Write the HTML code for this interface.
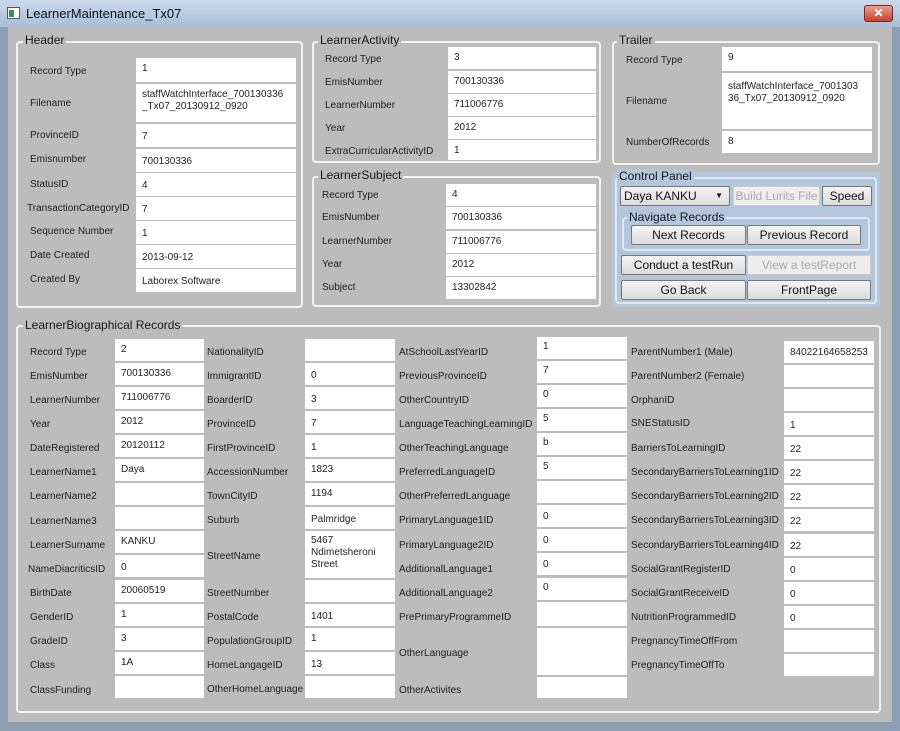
<!DOCTYPE html>
<html><head><meta charset="utf-8"><style>
*{margin:0;padding:0;box-sizing:border-box}
body{width:900px;height:731px;overflow:hidden;background:#8d9fb3;font-family:"Liberation Sans",sans-serif;position:relative;color:#1e1e1e}
.tb{position:absolute;left:0;top:0;width:900px;height:27px;background:linear-gradient(#c9d9ea,#a9bfd6)}
.ttl{position:absolute;left:26px;top:6px;font-size:13px;color:#111}
.ico{position:absolute;left:7px;top:7px;width:13px;height:12px;background:#fff;border:1px solid #557}
.ico:after{content:"";position:absolute;left:1px;top:2px;width:5px;height:7px;background:#3a8a5a}
.x{position:absolute;left:864px;top:5px;width:29px;height:17px;border-radius:3px;background:linear-gradient(#e8a090,#c8402a);border:1px solid #7a2a20;color:#fff;font-size:12px;font-weight:bold;text-align:center;line-height:15px}
.cl{position:absolute;left:8px;top:27px;width:884px;height:695px;background:#bcbcbc}
.g{position:absolute;border:2px solid #f2f2f2;border-radius:4px}
.gt{position:absolute;font-size:12px;background:#bcbcbc;padding:0 2px;color:#1a1a1a}
.l{position:absolute;font-size:10px;color:#222;white-space:nowrap}
.b{position:absolute;background:#fff;font-size:10px;padding:5px 0 0 6px;line-height:12px;color:#222}
.bt{position:absolute;height:20px;border:1px solid #777;border-radius:2px;background:linear-gradient(#f4f4f4,#dcdcdc);font-size:12px;text-align:center;line-height:18px;color:#111}
.dis{color:#aaa;background:#ededed;border-color:#ccc}
</style></head><body>
<div class="tb"><div class="ico"></div><div class="ttl">LearnerMaintenance_Tx07</div><div class="x">✕</div></div>
<div class="cl"></div>

<!-- Header -->
<div class="g" style="left:16px;top:41px;width:287px;height:267px"></div>
<div class="gt" style="left:23px;top:33px">Header</div>
<div class="l" style="left:30px;top:66px">Record Type</div><div class="b" style="left:136px;top:58px;width:160px;height:24px">1</div>
<div class="l" style="left:30px;top:98px">Filename</div><div class="b" style="left:136px;top:84px;width:160px;height:38px">staffWatchInterface_700130336<br>_Tx07_20130912_0920</div>
<div class="l" style="left:30px;top:130px">ProvinceID</div><div class="b" style="left:136px;top:124px;width:160px;height:23px;padding-top:7px">7</div>
<div class="l" style="left:30px;top:154px">Emisnumber</div><div class="b" style="left:136px;top:149px;width:160px;height:23px;padding-top:7px">700130336</div>
<div class="l" style="left:30px;top:179px">StatusID</div><div class="b" style="left:136px;top:173px;width:160px;height:23px;padding-top:7px">4</div>
<div class="l" style="left:27px;top:203px">TransactionCategoryID</div><div class="b" style="left:136px;top:197px;width:160px;height:23px;padding-top:7px">7</div>
<div class="l" style="left:30px;top:226px">Sequence Number</div><div class="b" style="left:136px;top:221px;width:160px;height:23px;padding-top:7px">1</div>
<div class="l" style="left:30px;top:250px">Date Created</div><div class="b" style="left:136px;top:245px;width:160px;height:23px;padding-top:7px">2013-09-12</div>
<div class="l" style="left:30px;top:274px">Created By</div><div class="b" style="left:136px;top:269px;width:160px;height:23px;padding-top:7px">Laborex Software</div>

<!-- LearnerActivity -->
<div class="g" style="left:312px;top:41px;width:289px;height:122px"></div>
<div class="gt" style="left:318px;top:33px">LearnerActivity</div>
<div class="l" style="left:325px;top:54px">Record Type</div><div class="b" style="left:448px;top:47px;width:148px;height:22px">3</div>
<div class="l" style="left:325px;top:77px">EmisNumber</div><div class="b" style="left:448px;top:71px;width:148px;height:22px">700130336</div>
<div class="l" style="left:325px;top:100px">LearnerNumber</div><div class="b" style="left:448px;top:94px;width:148px;height:22px">711006776</div>
<div class="l" style="left:325px;top:123px">Year</div><div class="b" style="left:448px;top:117px;width:148px;height:22px">2012</div>
<div class="l" style="left:325px;top:146px">ExtraCurricularActivityID</div><div class="b" style="left:448px;top:140px;width:148px;height:20px">1</div>

<!-- LearnerSubject -->
<div class="g" style="left:312px;top:176px;width:289px;height:131px"></div>
<div class="gt" style="left:318px;top:168px">LearnerSubject</div>
<div class="l" style="left:322px;top:190px">Record Type</div><div class="b" style="left:446px;top:184px;width:150px;height:22px">4</div>
<div class="l" style="left:322px;top:212px">EmisNumber</div><div class="b" style="left:446px;top:207px;width:150px;height:22px">700130336</div>
<div class="l" style="left:322px;top:236px">LearnerNumber</div><div class="b" style="left:446px;top:231px;width:150px;height:22px">711006776</div>
<div class="l" style="left:322px;top:259px">Year</div><div class="b" style="left:446px;top:254px;width:150px;height:22px">2012</div>
<div class="l" style="left:322px;top:282px">Subject</div><div class="b" style="left:446px;top:277px;width:150px;height:22px">13302842</div>

<!-- Trailer -->
<div class="g" style="left:612px;top:41px;width:268px;height:124px"></div>
<div class="gt" style="left:617px;top:33px">Trailer</div>
<div class="l" style="left:626px;top:55px">Record Type</div><div class="b" style="left:722px;top:47px;width:150px;height:24px">9</div>
<div class="l" style="left:626px;top:96px">Filename</div><div class="b" style="left:722px;top:73px;width:150px;height:56px;padding-top:8px">staffWatchInterface_7001303<br>36_Tx07_20130912_0920</div>
<div class="l" style="left:626px;top:137px">NumberOfRecords</div><div class="b" style="left:722px;top:131px;width:150px;height:22px">8</div>

<!-- Control Panel -->
<div style="position:absolute;left:612px;top:172px;width:268px;height:135px;background:#b3c6dc;border-radius:3px"></div>
<div class="g" style="left:615px;top:177px;width:262px;height:127px;border-color:#dfe8f2"></div>
<div class="gt" style="left:617px;top:169px;background:#b3c6dc">Control Panel</div>
<div class="bt" style="left:620px;top:186px;width:110px;text-align:left;padding-left:3px">Daya KANKU<span style="position:absolute;right:6px;top:0;font-size:8px">▼</span></div>
<div class="bt dis" style="left:733px;top:186px;width:87px">Build Lurits File</div>
<div class="bt" style="left:822px;top:186px;width:50px">Speed</div>
<div class="g" style="left:622px;top:217px;width:248px;height:34px;border-color:#dfe8f2"></div>
<div class="gt" style="left:627px;top:210px;background:#b3c6dc">Navigate Records</div>
<div class="bt" style="left:631px;top:225px;width:115px">Next Records</div>
<div class="bt" style="left:747px;top:225px;width:114px">Previous Record</div>
<div class="bt" style="left:621px;top:255px;width:125px">Conduct a testRun</div>
<div class="bt dis" style="left:747px;top:255px;width:124px">View a testReport</div>
<div class="bt" style="left:621px;top:280px;width:125px">Go Back</div>
<div class="bt" style="left:747px;top:280px;width:124px">FrontPage</div>

<!-- Bio -->
<div class="g" style="left:16px;top:325px;width:865px;height:388px"></div>
<div class="gt" style="left:23px;top:318px">LearnerBiographical Records</div>

<div class="l" style="left:30px;top:347px">Record Type</div><div class="b" style="left:115px;top:339px;width:89px;height:22px">2</div>
<div class="l" style="left:30px;top:371px">EmisNumber</div><div class="b" style="left:115px;top:363px;width:89px;height:22px">700130336</div>
<div class="l" style="left:30px;top:395px">LearnerNumber</div><div class="b" style="left:115px;top:387px;width:89px;height:22px">711006776</div>
<div class="l" style="left:30px;top:419px">Year</div><div class="b" style="left:115px;top:411px;width:89px;height:22px">2012</div>
<div class="l" style="left:30px;top:443px">DateRegistered</div><div class="b" style="left:115px;top:435px;width:89px;height:22px">20120112</div>
<div class="l" style="left:30px;top:467px">LearnerName1</div><div class="b" style="left:115px;top:459px;width:89px;height:22px">Daya</div>
<div class="l" style="left:30px;top:491px">LearnerName2</div><div class="b" style="left:115px;top:483px;width:89px;height:22px"></div>
<div class="l" style="left:30px;top:516px">LearnerName3</div><div class="b" style="left:115px;top:507px;width:89px;height:22px"></div>
<div class="l" style="left:30px;top:540px">LearnerSurname</div><div class="b" style="left:115px;top:531px;width:89px;height:22px">KANKU</div>
<div class="l" style="left:28px;top:564px">NameDiacriticsID</div><div class="b" style="left:115px;top:555px;width:89px;height:22px;padding-top:7px">0</div>
<div class="l" style="left:30px;top:588px">BirthDate</div><div class="b" style="left:115px;top:580px;width:89px;height:22px">20060519</div>
<div class="l" style="left:30px;top:612px">GenderID</div><div class="b" style="left:115px;top:604px;width:89px;height:22px">1</div>
<div class="l" style="left:30px;top:636px">GradeID</div><div class="b" style="left:115px;top:628px;width:89px;height:22px">3</div>
<div class="l" style="left:30px;top:660px">Class</div><div class="b" style="left:115px;top:652px;width:89px;height:22px">1A</div>
<div class="l" style="left:30px;top:685px">ClassFunding</div><div class="b" style="left:115px;top:676px;width:89px;height:22px"></div>

<div class="l" style="left:207px;top:347px">NationalityID</div><div class="b" style="left:305px;top:339px;width:90px;height:22px"></div>
<div class="l" style="left:207px;top:371px">ImmigrantID</div><div class="b" style="left:305px;top:363px;width:90px;height:22px;padding-top:7px">0</div>
<div class="l" style="left:207px;top:395px">BoarderID</div><div class="b" style="left:305px;top:387px;width:90px;height:22px;padding-top:7px">3</div>
<div class="l" style="left:207px;top:419px">ProvinceID</div><div class="b" style="left:305px;top:411px;width:90px;height:22px;padding-top:7px">7</div>
<div class="l" style="left:207px;top:443px">FirstProvinceID</div><div class="b" style="left:305px;top:435px;width:90px;height:22px;padding-top:7px">1</div>
<div class="l" style="left:207px;top:467px">AccessionNumber</div><div class="b" style="left:305px;top:459px;width:90px;height:22px">1823</div>
<div class="l" style="left:207px;top:491px">TownCityID</div><div class="b" style="left:305px;top:483px;width:90px;height:22px">1194</div>
<div class="l" style="left:207px;top:515px">Suburb</div><div class="b" style="left:305px;top:507px;width:90px;height:22px;padding-top:7px">Palmridge</div>
<div class="l" style="left:207px;top:551px">StreetName</div><div class="b" style="left:305px;top:531px;width:90px;height:47px;padding-top:4px">5467<br>Ndimetsheroni<br>Street</div>
<div class="l" style="left:207px;top:588px">StreetNumber</div><div class="b" style="left:305px;top:580px;width:90px;height:22px"></div>
<div class="l" style="left:207px;top:612px">PostalCode</div><div class="b" style="left:305px;top:604px;width:90px;height:22px;padding-top:7px">1401</div>
<div class="l" style="left:207px;top:636px">PopulationGroupID</div><div class="b" style="left:305px;top:628px;width:90px;height:22px">1</div>
<div class="l" style="left:207px;top:660px">HomeLangageID</div><div class="b" style="left:305px;top:652px;width:90px;height:22px;padding-top:7px">13</div>
<div class="l" style="left:207px;top:684px">OtherHomeLanguage</div><div class="b" style="left:305px;top:676px;width:90px;height:22px"></div>

<div class="l" style="left:399px;top:347px">AtSchoolLastYearID</div><div class="b" style="left:537px;top:337px;width:90px;height:22px;padding-top:4px">1</div>
<div class="l" style="left:399px;top:371px">PreviousProvinceID</div><div class="b" style="left:537px;top:361px;width:90px;height:22px;padding-top:4px">7</div>
<div class="l" style="left:399px;top:395px">OtherCountryID</div><div class="b" style="left:537px;top:385px;width:90px;height:22px;padding-top:4px">0</div>
<div class="l" style="left:399px;top:419px">LanguageTeachingLearningID</div><div class="b" style="left:537px;top:409px;width:90px;height:22px;padding-top:4px">5</div>
<div class="l" style="left:399px;top:443px">OtherTeachingLanguage</div><div class="b" style="left:537px;top:433px;width:90px;height:22px;padding-top:4px">b</div>
<div class="l" style="left:399px;top:467px">PreferredLanguageID</div><div class="b" style="left:537px;top:457px;width:90px;height:22px;padding-top:4px">5</div>
<div class="l" style="left:399px;top:491px">OtherPreferredLanguage</div><div class="b" style="left:537px;top:481px;width:90px;height:22px"></div>
<div class="l" style="left:399px;top:515px">PrimaryLanguage1ID</div><div class="b" style="left:537px;top:505px;width:90px;height:22px;padding-top:6px">0</div>
<div class="l" style="left:399px;top:540px">PrimaryLanguage2ID</div><div class="b" style="left:537px;top:529px;width:90px;height:22px;padding-top:6px">0</div>
<div class="l" style="left:399px;top:564px">AdditionalLanguage1</div><div class="b" style="left:537px;top:553px;width:90px;height:22px;padding-top:6px">0</div>
<div class="l" style="left:399px;top:588px">AdditionalLanguage2</div><div class="b" style="left:537px;top:578px;width:90px;height:22px;padding-top:4px">0</div>
<div class="l" style="left:399px;top:612px">PrePrimaryProgrammeID</div><div class="b" style="left:537px;top:602px;width:90px;height:24px"></div>
<div class="l" style="left:399px;top:648px">OtherLanguage</div><div class="b" style="left:537px;top:628px;width:90px;height:47px"></div>
<div class="l" style="left:399px;top:685px">OtherActivites</div><div class="b" style="left:537px;top:677px;width:90px;height:21px"></div>

<div class="l" style="left:631px;top:347px">ParentNumber1 (Male)</div><div class="b" style="left:784px;top:341px;width:90px;height:22px;padding-top:6px">84022164658253</div>
<div class="l" style="left:631px;top:371px">ParentNumber2 (Female)</div><div class="b" style="left:784px;top:365px;width:90px;height:22px"></div>
<div class="l" style="left:631px;top:395px">OrphanID</div><div class="b" style="left:784px;top:389px;width:90px;height:22px"></div>
<div class="l" style="left:631px;top:418px">SNEStatusID</div><div class="b" style="left:784px;top:413px;width:90px;height:22px;padding-top:7px">1</div>
<div class="l" style="left:631px;top:443px">BarriersToLearningID</div><div class="b" style="left:784px;top:437px;width:90px;height:22px;padding-top:7px">22</div>
<div class="l" style="left:631px;top:467px">SecondaryBarriersToLearning1ID</div><div class="b" style="left:784px;top:461px;width:90px;height:22px;padding-top:7px">22</div>
<div class="l" style="left:631px;top:491px">SecondaryBarriersToLearning2ID</div><div class="b" style="left:784px;top:485px;width:90px;height:22px;padding-top:7px">22</div>
<div class="l" style="left:631px;top:515px">SecondaryBarriersToLearning3ID</div><div class="b" style="left:784px;top:509px;width:90px;height:22px;padding-top:7px">22</div>
<div class="l" style="left:631px;top:540px">SecondaryBarriersToLearning4ID</div><div class="b" style="left:784px;top:534px;width:90px;height:22px;padding-top:7px">22</div>
<div class="l" style="left:631px;top:564px">SocialGrantRegisterID</div><div class="b" style="left:784px;top:558px;width:90px;height:22px;padding-top:7px">0</div>
<div class="l" style="left:631px;top:588px">SocialGrantReceiveID</div><div class="b" style="left:784px;top:582px;width:90px;height:22px;padding-top:7px">0</div>
<div class="l" style="left:631px;top:612px">NutritionProgrammedID</div><div class="b" style="left:784px;top:606px;width:90px;height:22px;padding-top:7px">0</div>
<div class="l" style="left:631px;top:636px">PregnancyTimeOffFrom</div><div class="b" style="left:784px;top:630px;width:90px;height:22px"></div>
<div class="l" style="left:631px;top:660px">PregnancyTimeOffTo</div><div class="b" style="left:784px;top:654px;width:90px;height:22px"></div>
</body></html>
